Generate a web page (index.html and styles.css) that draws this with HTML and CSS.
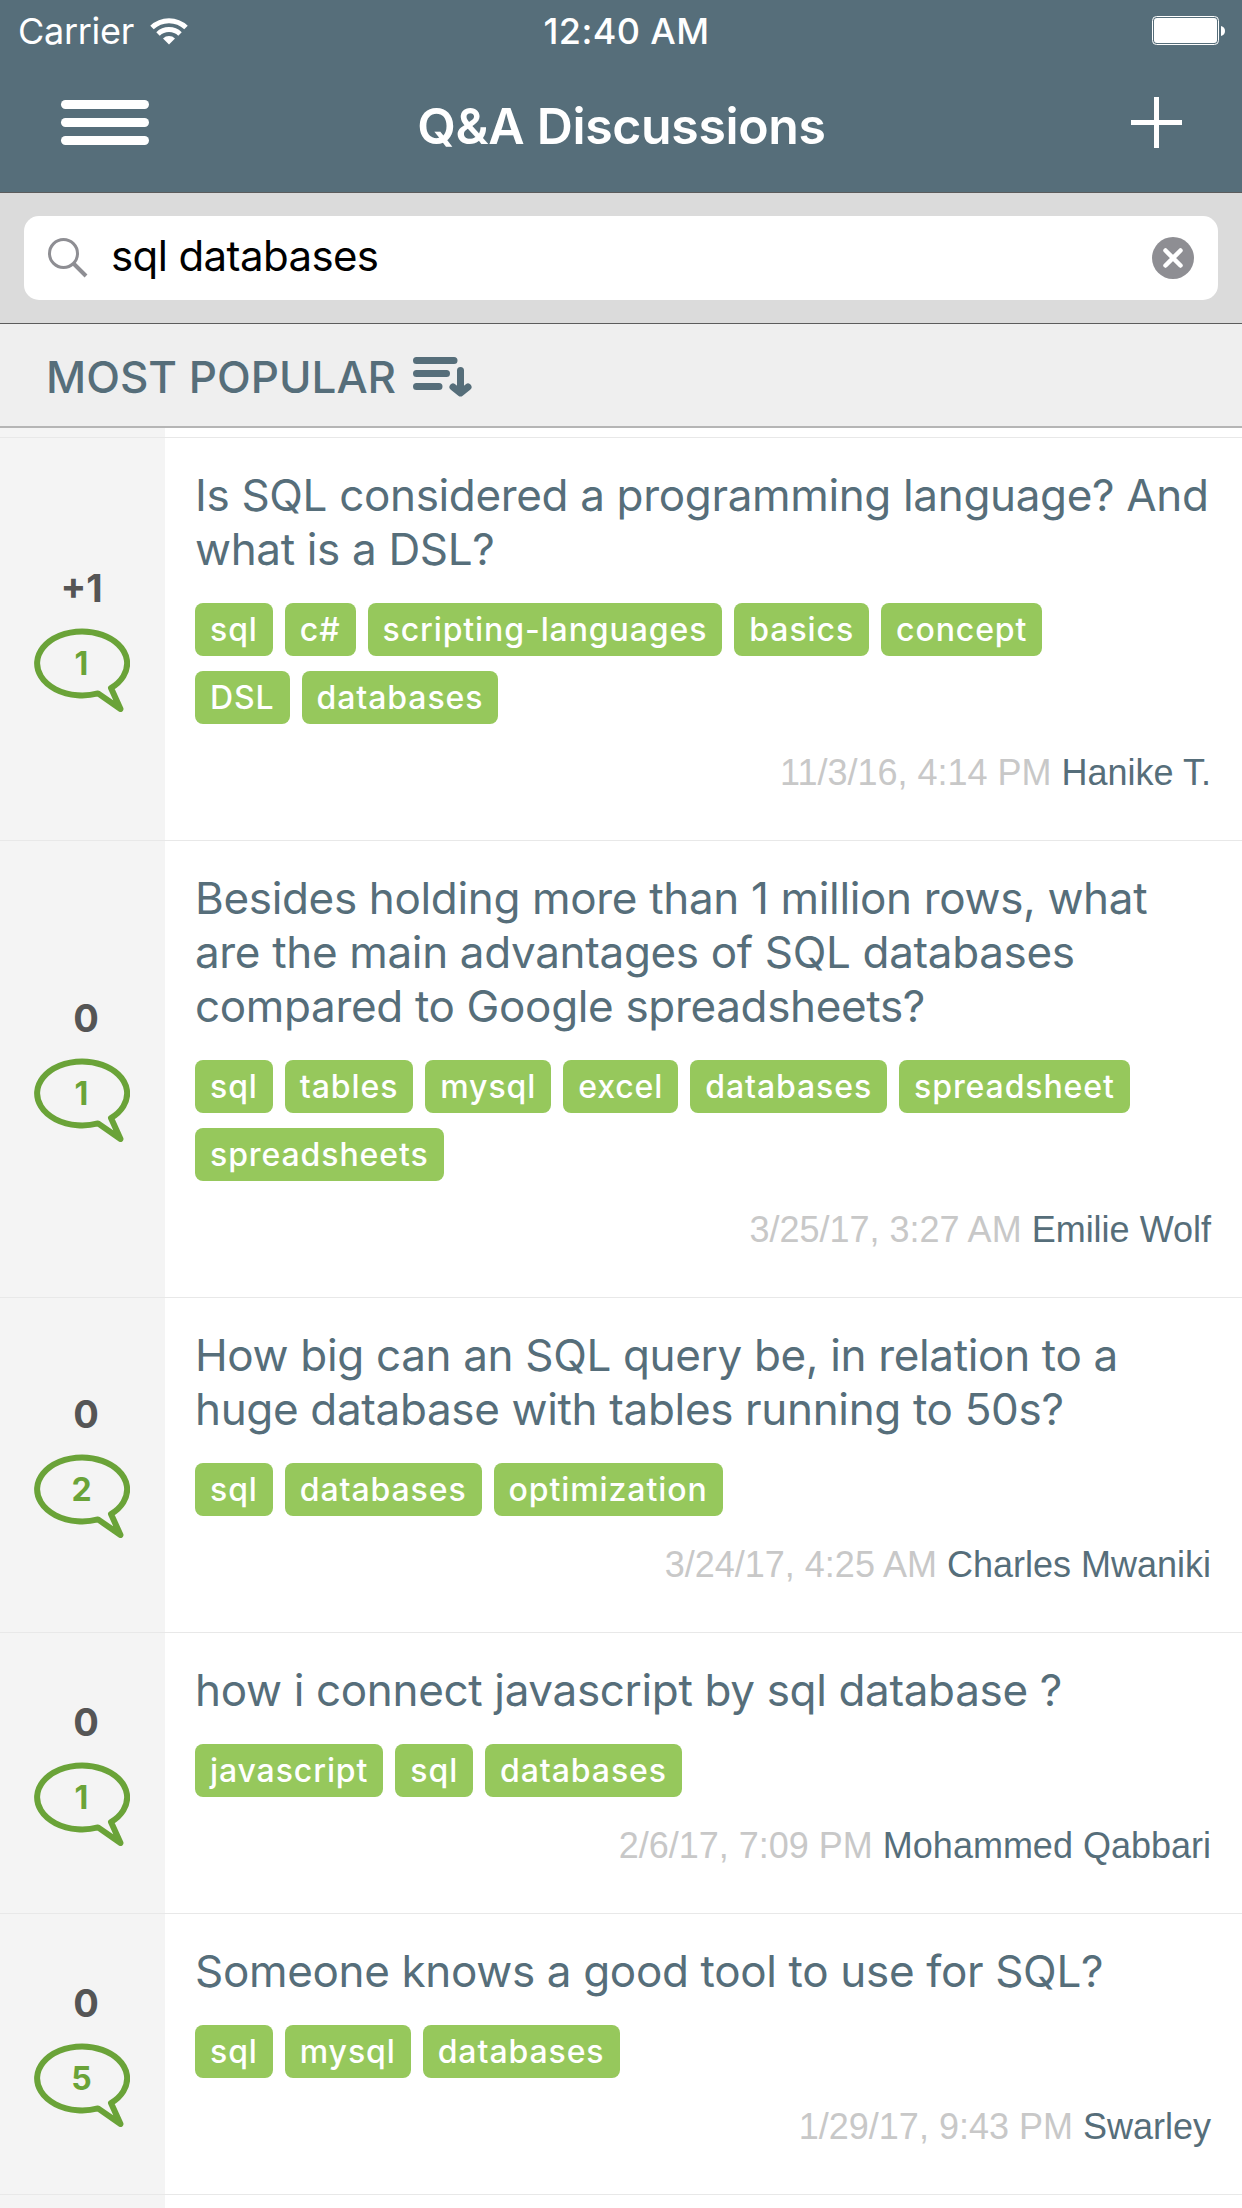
FILE: index.html
```html
<!DOCTYPE html>
<html lang="en">
<head>
    <meta charset="UTF-8">
    <meta name="viewport" content="width=device-width, initial-scale=1.0">
    <title>Q&amp;A Discussions</title>
    <link rel="stylesheet" href="styles.css">
</head>
<body>
    <!-- bubble outline shared by all the rows -->
    <svg class="defs" width="0" height="0">
        <symbol id="bubble" viewBox="0 0 96 84">
            <path d="M77 60A45 32 0 1 0 64 65.4L86.500 81Z" fill="none" stroke="#6aa338" stroke-width="6" stroke-linejoin="round"/>
        </symbol>
    </svg>

    <header class="header">
        <div class="status">
            <div class="carrier">
                <span>Carrier</span>
                <svg width="38" height="28" viewBox="0 0 38 28">
                    <path d="M2 10.500A24.500 24.500 0 0 1 36 10.500M8 17A16 16 0 0 1 30 17" fill="none" stroke="#fff" stroke-width="5"/>
                    <path d="M13 21.500A8.500 8.500 0 0 1 25 21.500L19 27.500Z" fill="#fff"/>
                </svg>
            </div>
            <div class="time">12:40 AM</div>
            <svg class="battery" width="74" height="30" viewBox="0 0 74 30">
                <rect x="0.500" y="0.500" width="66" height="28" rx="4" fill="none" stroke="#fff"/>
                <rect x="2" y="2" width="63" height="25" rx="3" fill="#fff"/>
                <path d="M69 10Q73 11 73 15T69 20Z" fill="#fff"/>
            </svg>
        </div>
        <div class="navbar">
            <button class="menu"><span></span><span></span><span></span></button>
            <h1>Q&amp;A Discussions</h1>
            <button class="add">
                <svg width="51" height="51" viewBox="0 0 51 51"><path d="M25.500 0V51M0 25.500H51" stroke="#fff" stroke-width="5"/></svg>
            </button>
        </div>
    </header>

    <div class="search">
        <div class="search-box">
            <svg width="40" height="40" viewBox="0 0 40 40">
                <circle cx="15.500" cy="15.500" r="14" fill="none" stroke="#8e8e93" stroke-width="3"/>
                <path d="M25.500 25.500L38 38" stroke="#8e8e93" stroke-width="4"/>
            </svg>
            <span class="query">sql databases</span>
            <svg width="42" height="42" viewBox="0 0 42 42">
                <circle cx="21" cy="21" r="21" fill="#8e8e93"/>
                <path d="M13.500 13.500L28.500 28.500M28.500 13.500L13.500 28.500" stroke="#fff" stroke-width="4.500" stroke-linecap="round"/>
            </svg>
        </div>
    </div>

    <div class="sort">
        <span>MOST POPULAR</span>
        <svg width="59" height="40" viewBox="0 0 59 40">
            <path d="M3.500 3.500H41M3.500 16.500H33.500M3.500 29.500H26M47.500 13.500V34M40 30L47.500 36L55 30" fill="none" stroke="#566e7a" stroke-width="7" stroke-linecap="round" stroke-linejoin="round"/>
        </svg>
    </div>

    <main class="list">
        <div class="row">
            <div class="side">
                <div class="votes plus">+1</div>
                <div class="answers"><svg width="96" height="84"><use href="#bubble"/></svg><span>1</span></div>
            </div>
            <div class="content">
                <h2>Is SQL considered a programming language? And<br>what is a DSL?</h2>
                <div class="tags">
                    <span>sql</span><span>c#</span><span>scripting-languages</span><span>basics</span><span>concept</span><span>DSL</span><span>databases</span>
                </div>
                <div class="meta">11/3/16, 4:14 PM <b>Hanike T.</b></div>
            </div>
        </div>
        <div class="row">
            <div class="side">
                <div class="votes">0</div>
                <div class="answers"><svg width="96" height="84"><use href="#bubble"/></svg><span>1</span></div>
            </div>
            <div class="content">
                <h2>Besides holding more than 1 million rows, what<br>are the main advantages of SQL databases<br>compared to Google spreadsheets?</h2>
                <div class="tags">
                    <span>sql</span><span>tables</span><span>mysql</span><span>excel</span><span>databases</span><span>spreadsheet</span><span>spreadsheets</span>
                </div>
                <div class="meta">3/25/17, 3:27 AM <b>Emilie Wolf</b></div>
            </div>
        </div>
        <div class="row">
            <div class="side">
                <div class="votes">0</div>
                <div class="answers"><svg width="96" height="84"><use href="#bubble"/></svg><span>2</span></div>
            </div>
            <div class="content">
                <h2>How big can an SQL query be, in relation to a<br>huge database with tables running to 50s?</h2>
                <div class="tags">
                    <span>sql</span><span>databases</span><span>optimization</span>
                </div>
                <div class="meta">3/24/17, 4:25 AM <b>Charles Mwaniki</b></div>
            </div>
        </div>
        <div class="row">
            <div class="side">
                <div class="votes">0</div>
                <div class="answers"><svg width="96" height="84"><use href="#bubble"/></svg><span>1</span></div>
            </div>
            <div class="content">
                <h2>how i connect javascript by sql database ?</h2>
                <div class="tags">
                    <span>javascript</span><span>sql</span><span>databases</span>
                </div>
                <div class="meta">2/6/17, 7:09 PM <b>Mohammed Qabbari</b></div>
            </div>
        </div>
        <div class="row">
            <div class="side">
                <div class="votes">0</div>
                <div class="answers"><svg width="96" height="84"><use href="#bubble"/></svg><span>5</span></div>
            </div>
            <div class="content">
                <h2>Someone knows a good tool to use for SQL?</h2>
                <div class="tags">
                    <span>sql</span><span>mysql</span><span>databases</span>
                </div>
                <div class="meta">1/29/17, 9:43 PM <b>Swarley</b></div>
            </div>
        </div>
        <div class="row last">
            <div class="side"></div>
        </div>
    </main>
</body>
</html>
```
FILE: styles.css
```css
* {
    box-sizing: border-box;
}
body {
    margin: 0;
    height: 2208px;
    overflow: hidden;
    display: flex;
    flex-direction: column;
    font-family: Inter, sans-serif;
    background-color: #fff;
}
h1, h2 {
    margin: 0;
}
svg {
    display: block;
    flex: none;
}
button {
    background: none;
    border: none;
    padding: 0;
}
.defs {
    display: none;
}

/* header */
.header {
    height: 193px;
    flex: none;
    background-color: #566e7a;
    border-bottom: 1px solid #5c5c5c;
    color: white;
}
.status {
    height: 60px;
    display: grid;
    grid-template-columns: 1fr auto 1fr;
    align-items: center;
    padding: 2px 16px 0 18px;
    font-size: 36px;
}
.carrier {
    display: flex;
    align-items: center;
    gap: 16px;
    letter-spacing: -0.3px;
}
.time {
    padding-left: 9px;
    font-weight: 500;
    letter-spacing: 0.4px;
}
.battery {
    justify-self: end;
}
.navbar {
    height: 132px;
    display: grid;
    grid-template-columns: 1fr auto 1fr;
    align-items: center;
    padding: 0 60px 7px 61px;
}
.navbar h1 {
    font-size: 50px;
    font-weight: 600;
    letter-spacing: -0.35px;
    padding-top: 7px;
}
.menu {
    display: flex;
    flex-direction: column;
    gap: 9px;
    width: 88px;
}
.menu span {
    height: 9px;
    border-radius: 5px;
    background-color: white;
}
.add {
    justify-self: end;
}

/* search */
.search {
    height: 131px;
    flex: none;
    padding: 23px 24px;
    background-color: #dbdbdb;
    border-bottom: 1px solid #5c5c5c;
}
.search-box {
    height: 84px;
    display: flex;
    align-items: center;
    padding: 0 24px;
    border-radius: 15px;
    background-color: white;
}
.query {
    flex: 1;
    padding: 0 0 5px 23px;
    font-size: 42px;
    letter-spacing: -0.6px;
}

/* sort */
.sort {
    height: 104px;
    flex: none;
    display: flex;
    align-items: center;
    gap: 17px;
    padding: 4px 0 0 46px;
    background-color: #efefef;
    border-bottom: 2px solid #b5b5b5;
    color: #566e7a;
    font-size: 44px;
    font-weight: 500;
}

/* list */
.list {
    padding-top: 9px;
    background: linear-gradient(to right, #f4f4f4 165px, #fff 165px);
}
.row {
    display: flex;
    border-top: 1px solid #e8e8e8;
}
.last {
    height: 40px;
}
.side {
    width: 165px;
    flex: none;
    display: flex;
    flex-direction: column;
    align-items: center;
    justify-content: center;
    padding: 0 2px 2px 0;
    background-color: #f4f4f4;
}
.votes {
    padding-left: 9px;
    line-height: 46px;
    margin-bottom: 17px;
    font-size: 38px;
    font-weight: 700;
    color: #555;
}
.plus {
    padding-left: 0;
}
.answers {
    display: grid;
    place-items: center;
    color: #6aa338;
    font-size: 32px;
    font-weight: 700;
}
.answers svg, .answers span {
    grid-area: 1 / 1;
}
.answers span {
    padding-bottom: 12px;
}
.content {
    flex: 1;
    min-width: 0;
    padding: 30px 31px 47px 30px;
}
.content h2 {
    font-size: 44px;
    font-weight: 400;
    line-height: 54px;
    letter-spacing: -0.34px;
    color: #566e7a;
    white-space: nowrap;
}
.tags {
    display: flex;
    flex-wrap: wrap;
    gap: 15px 12px;
    max-width: 950px;
    margin: 27px 0 28px;
}
.tags span {
    height: 53px;
    line-height: 53px;
    padding: 0 15px;
    border-radius: 8px;
    background-color: #96c85c;
    color: white;
    font-size: 32px;
    font-weight: 500;
    letter-spacing: 0.9px;
}
.meta {
    font-family: "Liberation Sans", Arial, sans-serif;
    font-size: 36px;
    line-height: 41px;
    text-align: right;
    color: #c8c8c8;
}
.meta b {
    font-weight: 400;
    color: #566e7a;
}
```
